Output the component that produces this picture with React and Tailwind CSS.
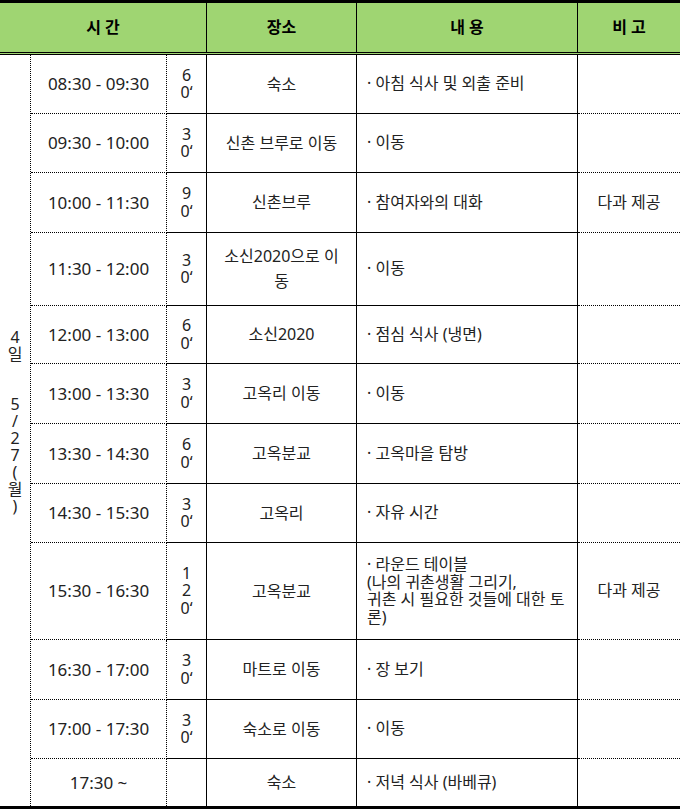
import React from "react";

const rows = [
  { time: "08:30 - 09:30", min: ["6", "0‘"], place: ["숙소"], content: ["· 아침 식사 및 외출 준비"], note: "", h: "h-[59px]" },
  { time: "09:30 - 10:00", min: ["3", "0‘"], place: ["신촌 브루로 이동"], content: ["· 이동"], note: "", h: "h-[59px]" },
  { time: "10:00 - 11:30", min: ["9", "0‘"], place: ["신촌브루"], content: ["· 참여자와의 대화"], note: "다과 제공", h: "h-[60px]" },
  { time: "11:30 - 12:00", min: ["3", "0‘"], place: ["소신2020으로 이", "동"], content: ["· 이동"], note: "", h: "h-[73px]" },
  { time: "12:00 - 13:00", min: ["6", "0‘"], place: ["소신2020"], content: ["· 점심 식사 (냉면)"], note: "", h: "h-[58px]" },
  { time: "13:00 - 13:30", min: ["3", "0‘"], place: ["고옥리 이동"], content: ["· 이동"], note: "", h: "h-[60px]" },
  { time: "13:30 - 14:30", min: ["6", "0‘"], place: ["고옥분교"], content: ["· 고옥마을 탐방"], note: "", h: "h-[60px]" },
  { time: "14:30 - 15:30", min: ["3", "0‘"], place: ["고옥리"], content: ["· 자유 시간"], note: "", h: "h-[59px]" },
  {
    time: "15:30 - 16:30",
    min: ["1", "2", "0‘"],
    place: ["고옥분교"],
    content: ["· 라운드 테이블", "(나의 귀촌생활 그리기,", "귀촌 시 필요한 것들에 대한 토", "론)"],
    note: "다과 제공",
    h: "h-[97px]",
  },
  { time: "16:30 - 17:00", min: ["3", "0‘"], place: ["마트로 이동"], content: ["· 장 보기"], note: "", h: "h-[60px]" },
  { time: "17:00 - 17:30", min: ["3", "0‘"], place: ["숙소로 이동"], content: ["· 이동"], note: "", h: "h-[59px]" },
  { time: "17:30 ~", min: [], place: ["숙소"], content: ["· 저녁 식사 (바베큐)"], note: "", h: "h-[47px]" },
];

const Lines = ({ items }) => items.map((t, i) => <div key={i}>{t}</div>);

const App = () => {
  return (
    <div
      className="w-[680px] bg-white text-[16px] leading-[17.5px] text-[#222]"
      style={{ fontFamily: '"Noto Sans", "Noto Sans CJK KR", sans-serif' }}
    >
      <div className="border-t-[3px] border-b-[3px] border-black">
        {/* Header */}
        <div className="grid grid-cols-[207px_150px_221px_102px] h-[52px] bg-[#9fd572] border-b-[3px] border-double border-black font-semibold text-black">
          <div className="flex items-center justify-center border-r border-black">시 간</div>
          <div className="flex items-center justify-center border-r border-black">장소</div>
          <div className="flex items-center justify-center border-r border-black">내 용</div>
          <div className="flex items-center justify-center">비 고</div>
        </div>

        {/* Body */}
        <div className="flex">
          <div className="w-[31px] shrink-0 border-r border-dotted border-black flex flex-col items-center justify-center pb-[18px] leading-[17px]">
            <div>4</div>
            <div>일</div>
            <div className="h-[33px]"></div>
            <div>5</div>
            <div>/</div>
            <div>2</div>
            <div>7</div>
            <div>(</div>
            <div>월</div>
            <div>)</div>
          </div>
          <div className="flex-1">
            {rows.map((r, i) => {
              const last = i === rows.length - 1;
              const rowBorder = last ? "" : "border-b border-dotted border-black";
              return (
                <div key={i} className={`grid grid-cols-[136px_40px_150px_221px_102px] ${r.h}`}>
                  <div className={`flex items-center justify-center text-[17px] border-r border-dotted border-black ${rowBorder}`}>
                    {r.time}
                  </div>
                  <div className={`flex flex-col items-center justify-center border-r border-solid border-black ${rowBorder}`}>
                    <Lines items={r.min} />
                  </div>
                  <div className={`flex flex-col items-center justify-center text-center leading-[25px] border-r border-solid border-black ${rowBorder}`}>
                    <Lines items={r.place} />
                  </div>
                  <div className={`flex flex-col justify-center pl-[10px] border-r border-solid border-black ${rowBorder}`}>
                    <Lines items={r.content} />
                  </div>
                  <div className={`flex items-center justify-center ${rowBorder}`}>{r.note}</div>
                </div>
              );
            })}
          </div>
        </div>
      </div>
    </div>
  );
};

export default App;
